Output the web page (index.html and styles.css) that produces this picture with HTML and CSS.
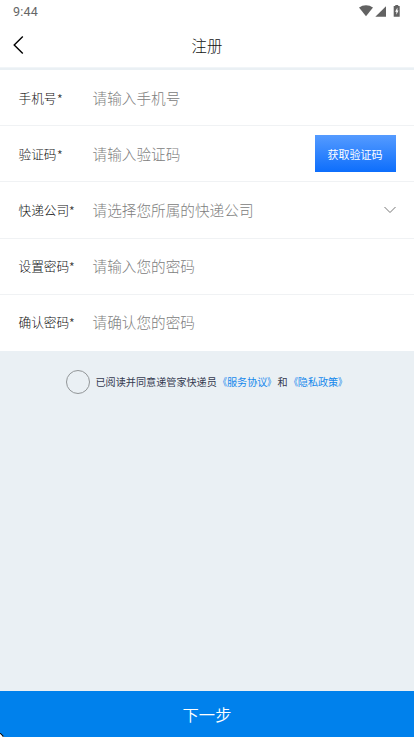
FILE: index.html
```html
<!DOCTYPE html>
<html lang="zh-CN">
<head>
<meta charset="utf-8">
<meta name="viewport" content="width=device-width, initial-scale=1">
<title>注册</title>
<link rel="stylesheet" href="styles.css">
</head>
<body>
<div class="screen">
  <div class="status">
    <span class="time">9:44</span>
    <svg class="status-icons" width="44" height="16" viewBox="0 0 44 16" fill="#626262">
      <path d="M0 3.6C4 .3 10 .3 14 3.6L7 12.3Z"/>
      <path d="M27 2.2V12.8H16.3Z"/>
      <path d="M36.3 1H39.2V2H40.7V12.8H34.7V2H36.3Z"/>
      <path d="M38.4 3.6L36.1 7.7H37.4V10.7L39.5 6.6H38.4Z" fill="#fff"/>
    </svg>
  </div>
  <header class="header">
    <svg class="back" width="14" height="20" viewBox="0 0 14 20" fill="none" stroke="#000" stroke-width="1.4"><path d="M10.8 1.4L2.2 10L10.8 18.6"/></svg>
    <h1>注册</h1>
  </header>
  <form class="form">
    <label class="row"><span class="label">手机号<b>*</b></span><span class="hint">请输入手机号</span></label>
    <div class="row"><span class="label">验证码<b>*</b></span><span class="hint">请输入验证码</span><button type="button" class="code">获取验证码</button></div>
    <div class="row"><span class="label">快递公司<b>*</b></span><span class="hint">请选择您所属的快递公司</span>
      <svg class="chevron" width="12" height="8" viewBox="0 0 12 8" fill="none" stroke="#777" stroke-width="1"><path d="M.5 1L6 6.5L11.5 1"/></svg>
    </div>
    <label class="row"><span class="label">设置密码<b>*</b></span><span class="hint">请输入您的密码</span></label>
    <label class="row"><span class="label">确认密码<b>*</b></span><span class="hint">请确认您的密码</span></label>
  </form>
  <div class="agreement"><span class="circle"></span><span class="terms">已阅读并同意递管家快递员<a><i class="open">《</i>服务协议<i class="close">》</i></a>和<a><i class="open">《</i>隐私政策<i class="close">》</i></a></span></div>
  <button type="button" class="next">下一步<svg class="corner" width="4" height="4" viewBox="0 0 4 4"><path d="M0 0L4 4H0Z" fill="#fff"/><path d="M0 .5H1V1.5H2V2.5H3V4" fill="none" stroke="#111"/></svg></button>
</div>
</body>
</html>
```
FILE: styles.css
```css
* { box-sizing: border-box; }
body { margin: 0; font-family: "Noto Sans CJK SC Light", "Noto Sans CJK SC", sans-serif; font-weight: 300; }
button { border: 0; padding: 0; font-family: inherit; color: #fff; }
.screen {
  width: 414px;
  height: 737px;
  display: flex;
  flex-direction: column;
  background: #eaf0f4;
  overflow: hidden;
}
.status {
  height: 23px;
  flex: none;
  display: flex;
  justify-content: space-between;
  padding: 4px 11px 0 13px;
  background: #fff;
}
.time { font: 12.6px/16px Roboto, sans-serif; color: #666; letter-spacing: .2px; }
.header {
  height: 44.5px;
  flex: none;
  display: grid;
  grid-template-columns: 1fr auto 1fr;
  align-items: center;
  padding: 0 12px 1px;
  background: #fff;
  border-bottom: 1px solid #f1f5f8;
}
h1 { margin: 1px 0 0; font-size: 15.4px; line-height: 24px; font-weight: 300; color: #111; }
.back { margin-top: 1px; }
.form { margin-top: 2.5px; flex: none; background: #fff; }
.row {
  height: 56.2px;
  display: flex;
  align-items: center;
  padding: 0 18.5px;
  border-bottom: 1px solid #f0f2f4;
}
.row:last-child { border-bottom-color: #fff; }
.label, .hint { line-height: 20px; white-space: nowrap; }
.label { width: 74px; flex: none; font-size: 12.7px; color: #111; }
.label b { display: inline-block; font-weight: 300; color: #333; transform: translateY(1.5px) scale(1.1); }
.hint { flex: 1; font-size: 14.65px; color: #808080; }
.row:nth-child(n+4) .label, .row:nth-child(n+4) .hint { padding-bottom: 1px; }
.code {
  width: 81px;
  height: 37px;
  font-family: "Noto Sans CJK SC", sans-serif;
  font-weight: 400;
  font-size: 11px;
  background: linear-gradient(#559bff, #0d6efc);
}
.agreement {
  display: flex;
  align-items: center;
  height: 24px;
  margin: 19px 0 0 66px;
}
.circle { width: 24px; height: 24px; border: 1px solid #929698; border-radius: 50%; }
.terms {
  margin-left: 5.5px;
  font-family: "Noto Sans CJK SC", sans-serif;
  font-weight: 400;
  font-size: 10.12px;
  color: #343a50;
  white-space: nowrap;
}
.terms a { color: #1688ec; }
.terms i { display: inline-block; font-style: normal; }
.open { transform: scaleX(.85); transform-origin: right; }
.close { transform: scaleX(.85); transform-origin: left; }
.next {
  position: relative;
  height: 46px;
  margin-top: auto;
  flex: none;
  padding-bottom: 1px;
  font-family: "Noto Sans CJK SC", sans-serif;
  font-weight: 350;
  font-size: 16.3px;
  background: #0081ec;
}
.corner { position: absolute; left: 0; bottom: 0; }
```
